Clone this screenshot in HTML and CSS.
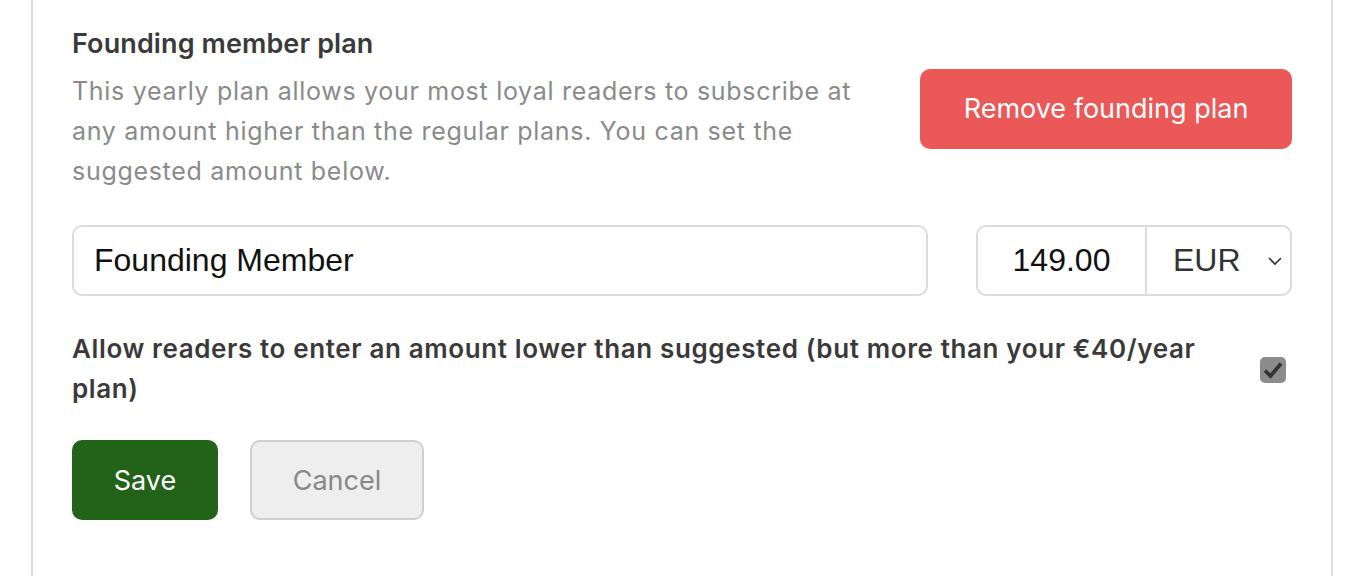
FILE: index.html
```html
<!DOCTYPE html>
<html lang="en">
<head>
    <meta charset="UTF-8">
    <meta name="viewport" content="width=device-width, initial-scale=1.0">
    <title>Founding member plan</title>
    <link rel="stylesheet" href="styles.css">
</head>
<body>
    <div class="panel">
        <div class="plan-header">
            <div class="plan-info">
                <h2>Founding member plan</h2>
                <p>This yearly plan allows your most loyal readers to subscribe at any amount higher than the regular plans. You can set the suggested amount below.</p>
            </div>
            <button class="btn btn-danger" id="remove-button">Remove founding plan</button>
        </div>

        <div class="plan-fields">
            <input type="text" class="name-input" value="Founding Member">
            <div class="price-group">
                <input type="text" class="price-input" value="149.00">
                <div class="currency">
                    <span>EUR</span>
                    <svg width="16" height="10" viewBox="0 0 16 10"><path d="M2 2 L8 8 L14 2" fill="none" stroke="#333" stroke-width="1.6"/></svg>
                </div>
            </div>
        </div>

        <label class="allow-row">
            <span class="allow-text">Allow readers to enter an amount lower than suggested (but more than your €40/year plan)</span>
            <span class="fake-check">
                <svg width="22" height="20" viewBox="0 0 22 20"><path d="M3 10.5 L8.5 16 L19 3.5" fill="none" stroke="#333" stroke-width="3.8"/></svg>
            </span>
        </label>

        <div class="actions">
            <button class="btn btn-save">Save</button>
            <button class="btn btn-cancel">Cancel</button>
        </div>
    </div>
</body>
</html>
```

FILE: styles.css
```css
body {
    margin: 0;
    background-color: #fff;
    font-family: Inter, "Noto Sans", sans-serif;
}
.panel {
    margin-left: 31px;
    width: 1302px;
    min-height: 600px;
    border-left: 2px solid #dcdcdc;
    border-right: 2px solid #dcdcdc;
    padding: 26px 39px 0 39px;
    box-sizing: border-box;
}
.plan-header {
    display: flex;
    align-items: center;
    gap: 40px;
}
.plan-info {
    flex: 1;
}
.plan-info h2 {
    margin: 0 0 9px;
    font-size: 27px;
    letter-spacing: 0.1px;
    line-height: 36px;
    font-weight: 600;
    color: #3a3a3a;
}
.plan-info p {
    margin: 0;
    font-size: 25px;
    letter-spacing: 0.7px;
    line-height: 40px;
    color: #8a8a8a;
}
.btn {
    font-family: Inter, "Noto Sans", sans-serif;
    font-size: 27px;
    height: 80px;
    border-radius: 10px;
    border: none;
    cursor: pointer;
}
.btn-danger {
    width: 372px;
    background-color: #eb5858;
    color: #fff;
}
.plan-fields {
    display: flex;
    gap: 48px;
    margin-top: 34px;
}
.name-input, .price-input {
    font-family: "Liberation Sans", Arial, sans-serif;
    font-size: 32px;
    color: #111;
}
.name-input {
    flex: 1;
    height: 71px;
    box-sizing: border-box;
    border: 2px solid #dcdcdc;
    border-radius: 10px;
    padding: 0 20px;
    outline: none;
}
.price-group {
    display: flex;
    width: 316px;
    height: 71px;
    box-sizing: border-box;
    border: 2px solid #dcdcdc;
    border-radius: 10px;
}
.price-input {
    width: 167px;
    border: none;
    border-right: 2px solid #dcdcdc;
    text-align: center;
    outline: none;
    background: transparent;
    padding: 0;
}
.currency {
    flex: 1;
    display: flex;
    align-items: center;
    justify-content: space-between;
    padding: 0 7px 0 26px;
    font-family: "Liberation Sans", Arial, sans-serif;
    font-size: 32px;
    color: #333;
}
.allow-row {
    display: flex;
    align-items: center;
    justify-content: space-between;
    margin-top: 33px;
}
.allow-text {
    width: 1150px;
    font-size: 26px;
    letter-spacing: 0.62px;
    line-height: 40px;
    font-weight: 600;
    color: #3a3a3a;
}
.fake-check {
    width: 26px;
    height: 26px;
    margin: 2px 6px 0 0;
    border-radius: 5px;
    background-color: #8c8c8c;
    display: flex;
    align-items: center;
    justify-content: center;
}
.actions {
    display: flex;
    gap: 32px;
    margin-top: 31px;
}
.btn-save {
    width: 146px;
    background-color: #236219;
    color: #fff;
}
.btn-cancel {
    width: 174px;
    background-color: #eeeeee;
    border: 2px solid #cfcfcf;
    color: #888;
}
```
